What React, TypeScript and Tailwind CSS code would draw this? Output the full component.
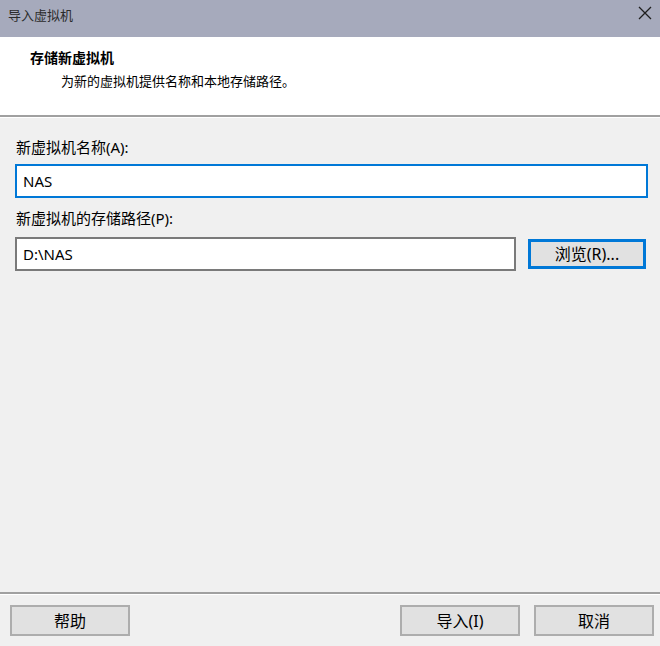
export default function App() {
  const font = { fontFamily: '"Noto Sans", "Noto Sans CJK SC", sans-serif' };
  return (
    <div
      className="w-[660px] h-[646px] flex flex-col bg-[#f0f0f0] text-black overflow-hidden"
      style={font}
    >
      {/* title bar */}
      <div className="h-[37px] bg-[#a6aabc] flex items-start justify-between pl-[8px] pr-[8px] pt-[5px]">
        <span className="text-[13px] leading-[20px] text-[#2b2b2b]">导入虚拟机</span>
        <svg width="14" height="14" viewBox="0 0 14 14" className="mt-[1px]">
          <path d="M1 1 L13 13 M13 1 L1 13" stroke="#1f1f1f" strokeWidth="1.3" fill="none" />
        </svg>
      </div>

      {/* header */}
      <div className="h-[78px] bg-white pl-[30px] pt-[11px]">
        <div className="text-[14px] leading-[20px] font-bold">存储新虚拟机</div>
        <div className="text-[13px] leading-[20px] pl-[31px] mt-[3px]">为新的虚拟机提供名称和本地存储路径。</div>
      </div>
      <div className="h-[2px] bg-[#a0a0a0]" />
      <div className="h-px bg-white" />

      {/* body */}
      <div className="flex-1 pl-[15px] pr-[12px] pt-[20px]">
        <div className="text-[15px] leading-[18px] pl-px">新虚拟机名称(A):</div>
        <div className="mt-[8px] h-[34px] border-2 border-[#0078d7] bg-white flex items-center px-[6px] text-[15px]">
          NAS
        </div>
        <div className="text-[15px] leading-[18px] pl-px mt-[11px]">新虚拟机的存储路径(P):</div>
        <div className="mt-[10px] flex items-center">
          <div className="w-[501px] h-[34px] border-2 border-[#7a7a7a] bg-white flex items-center px-[6px] text-[15px]">
            D:\NAS
          </div>
          <button className="ml-[12px] w-[118px] h-[30px] border-[3px] border-[#0078d7] bg-[#e1e1e1] text-[16px] leading-none flex items-center justify-center">
            浏览(R)...
          </button>
        </div>
      </div>

      {/* footer */}
      <div className="h-[2px] bg-[#a0a0a0]" />
      <div className="h-px bg-white" />
      <div className="h-[51px] flex items-start pt-[10px] pl-[10px] pr-[6px]">
        <button className="w-[120px] h-[31px] border-2 border-[#adadad] bg-[#e1e1e1] text-[16px] flex items-center justify-center">
          帮助
        </button>
        <div className="flex-1" />
        <button className="w-[120px] h-[31px] border-2 border-[#adadad] bg-[#e1e1e1] text-[16px] flex items-center justify-center">
          导入(I)
        </button>
        <button className="ml-[14px] w-[120px] h-[31px] border-2 border-[#adadad] bg-[#e1e1e1] text-[16px] flex items-center justify-center">
          取消
        </button>
      </div>
    </div>
  );
}
